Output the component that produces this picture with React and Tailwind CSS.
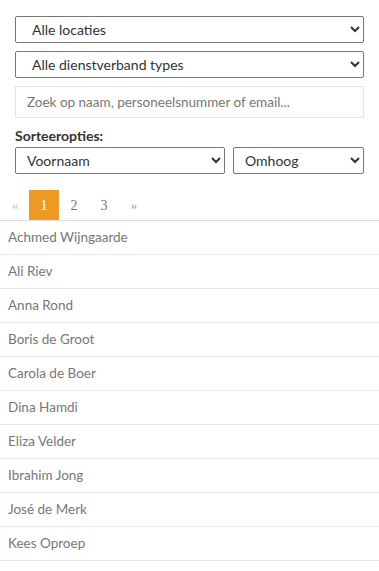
import React from 'react';

const names = [
  'Achmed Wijngaarde',
  'Ali Riev',
  'Anna Rond',
  'Boris de Groot',
  'Carola de Boer',
  'Dina Hamdi',
  'Eliza Velder',
  'Ibrahim Jong',
  'José de Merk',
  'Kees Oproep',
];

const selectCls =
  'block h-[27px] border border-[#767676] rounded-[2px] bg-white text-[#333] text-[14px] font-normal outline-none';

const App = () => {
  return (
    <div className="w-[379px] min-h-[571px] bg-white font-['Lato','Liberation_Sans',sans-serif]">
      <div className="px-[15px] pt-[16px]">
        <select className={`${selectCls} w-full pl-[12px]`} defaultValue="all">
          <option value="all">Alle locaties</option>
        </select>
        <select className={`${selectCls} w-full pl-[12px] mt-[8px]`} defaultValue="all">
          <option value="all">Alle dienstverband types</option>
        </select>
        <input
          type="text"
          placeholder="Zoek op naam, personeelsnummer of email..."
          className="block w-full h-[32px] mt-[8px] px-[11px] border border-[#e3e3e3] text-[13.5px] text-[#555] placeholder:text-[#777] outline-none"
        />
        <div className="mt-[8px] text-[14px] font-bold text-[#333] leading-[20px]">Sorteeropties:</div>
        <div className="flex gap-[8px] mt-[1px]">
          <select className={`${selectCls} pl-[7px] w-[210px] shrink-0`} defaultValue="first">
            <option value="first">Voornaam</option>
          </select>
          <select className={`${selectCls} pl-[7px] flex-1 min-w-0`} defaultValue="asc">
            <option value="asc">Omhoog</option>
          </select>
        </div>
      </div>

      <div className="flex mt-[16px] font-['Liberation_Serif',serif] text-[14px]">
        <span className="w-[30px] h-[30px] flex items-center justify-center text-[#b8b8c0] text-[13px]">«</span>
        <span className="w-[30px] h-[30px] -ml-px flex items-center justify-center bg-[#ec9a23] text-white text-[15px]">1</span>
        <span className="w-[30px] h-[30px] flex items-center justify-center text-[#777]">2</span>
        <span className="w-[30px] h-[30px] flex items-center justify-center text-[#777]">3</span>
        <span className="w-[30px] h-[30px] flex items-center justify-center text-[#9a9ab0] text-[13px]">»</span>
      </div>

      <ul className="border-t border-[#ddd]">
        {names.map((n) => (
          <li
            key={n}
            className="h-[34px] px-[8px] flex items-center border-b border-[#e8e8e8] text-[13.5px] text-[#777]"
          >
            {n}
          </li>
        ))}
      </ul>
    </div>
  );
};

export default App;
